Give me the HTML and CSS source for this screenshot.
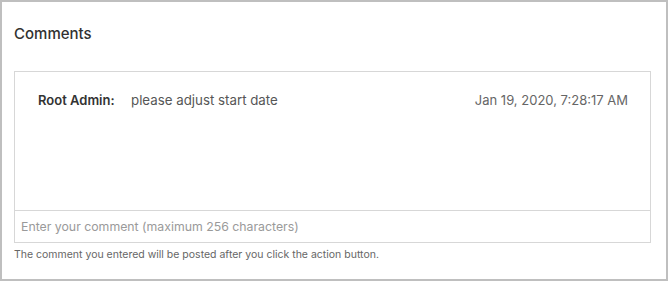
FILE: index.html
```html
<!DOCTYPE html>
<html>
<head>
<meta charset="utf-8">
<link rel="stylesheet" href="styles.css">
</head>
<body>
<div class="frame">
  <h4 class="title">Comments</h4>
  <div class="comments">
    <div class="list">
      <div class="row">
        <span class="author">Root Admin:</span>
        <span class="text">please adjust start date</span>
        <span class="date">Jan 19, 2020, 7:28:17 AM</span>
      </div>
    </div>
    <input class="entry" type="text" placeholder="Enter your comment (maximum 256 characters)">
  </div>
  <div class="help">The comment you entered will be posted after you click the action button.</div>
</div>
</body>
</html>
```
FILE: styles.css
```css
html, body { margin: 0; padding: 0; background: #fff; }
body { font-family: "Inter", "Open Sans", sans-serif; }
.frame {
  box-sizing: border-box;
  width: 668px;
  height: 281px;
  border: 2px solid #bfbfbf;
  padding: 0 15px 0 12px;
}
.title {
  margin: 0;
  padding-top: 23px;
  height: 69px;
  box-sizing: border-box;
  font-size: 15px;
  font-weight: 500;
  color: #313131;
  line-height: 18px;
}
.comments {
  border: 1px solid #d7d7d7;
}
.list {
  height: 139px;
  border-bottom: 1px solid #d7d7d7;
  box-sizing: border-box;
  padding: 19px 22px 0 23px;
}
.row { display: flex; align-items: baseline; font-size: 13px; line-height: 18px; }
.author { font-weight: 600; color: #333; width: 93px; }
.text { color: #565656; flex: 1; font-size: 13.3px; }
.date { color: #666; }
.entry {
  display: block;
  box-sizing: border-box;
  width: 100%;
  height: 31px;
  border: none;
  outline: none;
  padding: 0 6px;
  font-family: inherit;
  font-size: 12.3px;
  color: #333;
}
.entry::placeholder { color: #9a9a9a; }
.help {
  margin-top: 5px;
  font-size: 10.5px;
  color: #666;
  line-height: 14px;
}
```
